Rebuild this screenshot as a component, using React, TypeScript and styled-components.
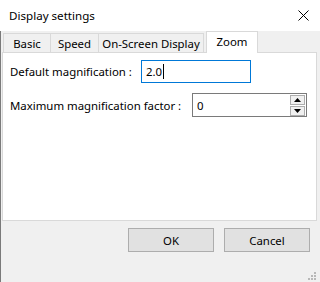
import styled, { createGlobalStyle } from "styled-components";

const GlobalStyle = createGlobalStyle`
  html, body {
    margin: 0;
    padding: 0;
    background: #f0f0f0;
  }
  body {
    font-family: "Noto Sans", "Open Sans", sans-serif;
    font-size: 11.4px;
    color: #000;
  }
`;

const Frame = styled.div`
  width: 320px;
  height: 282px;
  display: flex;
  flex-direction: column;
  background: #f0f0f0;
  overflow: hidden;
`;

const TitleBar = styled.div`
  height: 31px;
  flex: none;
  display: flex;
  align-items: center;
  justify-content: space-between;
  background: #fff;
  padding: 0 11px 1px 9px;
  box-sizing: border-box;
`;

const Title = styled.span`
  font-size: 11.6px;
`;

const Body = styled.div`
  flex: 1;
  display: flex;
  flex-direction: column;
  border-left: 1px solid #7a7a7a;
  padding: 0 3px 0 1px;
`;

const TabStrip = styled.div`
  height: 21px;
  display: flex;
  align-items: flex-end;
  padding-left: 1px;
`;

const Tab = styled.div<{ $w: number; $active?: boolean }>`
  box-sizing: border-box;
  width: ${({ $w }) => $w}px;
  height: ${({ $active }) => ($active ? 22 : 19)}px;
  margin-left: ${({ $active }) => ($active ? 2 : -1)}px;
  margin-bottom: ${({ $active }) => ($active ? -1 : 0)}px;
  border: 1px solid #d9d9d9;
  border-bottom: none;
  background: ${({ $active }) => ($active ? "#fff" : "#f0f0f0")};
  display: flex;
  align-items: center;
  justify-content: center;
  white-space: nowrap;
  padding-bottom: ${({ $active }) => ($active ? 2 : 0)}px;
  position: relative;
  z-index: ${({ $active }) => ($active ? 1 : 0)};
  &:first-child {
    margin-left: 0;
  }
`;

const Panel = styled.div`
  box-sizing: border-box;
  height: 169px;
  background: #fff;
  border: 1px solid #d9d9d9;
  padding: 7px 7px;
  display: flex;
  flex-direction: column;
  gap: 10px;
`;

const Row = styled.div`
  display: flex;
  align-items: center;
`;

const Label = styled.span<{ $w: number }>`
  width: ${({ $w }) => $w}px;
  flex: none;
  white-space: nowrap;
`;

const TextBox = styled.div`
  box-sizing: border-box;
  width: 110px;
  height: 23px;
  border: 1px solid #0078d7;
  display: flex;
  align-items: center;
  padding-left: 4px;
`;

const Caret = styled.span`
  display: inline-block;
  width: 1px;
  height: 15px;
  background: #000;
  margin-left: 1px;
`;

const SpinBox = styled.div`
  box-sizing: border-box;
  width: 115px;
  height: 24px;
  border: 1px solid #7a7a7a;
  display: flex;
  align-items: center;
  padding-left: 4px;
  padding-right: 1px;
`;

const SpinValue = styled.span`
  flex: 1;
`;

const SpinButtons = styled.div`
  display: flex;
  flex-direction: column;
  gap: 1px;
  width: 15px;
`;

const SpinButton = styled.div`
  box-sizing: border-box;
  height: 10px;
  background: #f0f0f0;
  border: 1px solid #adadad;
  display: flex;
  align-items: center;
  justify-content: center;
`;

const Footer = styled.div`
  flex: 1;
  display: flex;
  justify-content: flex-end;
  align-items: flex-start;
  gap: 10px;
  padding: 7px 7px 0 0;
  position: relative;
`;

const Button = styled.button`
  box-sizing: border-box;
  width: 86px;
  height: 24px;
  background: #e1e1e1;
  border: 1px solid #adadad;
  font-family: inherit;
  font-size: 11.4px;
  color: #000;
  padding: 0;
`;

const Grip = styled.svg`
  position: absolute;
  right: 1px;
  bottom: 2px;
`;

const Arrow = ({ up }: { up?: boolean }) => (
  <svg width="7" height="4" viewBox="0 0 7 4">
    <polygon points={up ? "3.5,0 7,4 0,4" : "0,0 7,0 3.5,4"} fill="#000" />
  </svg>
);

const App = () => {
  return (
    <>
      <GlobalStyle />
      <Frame>
        <TitleBar>
          <Title>Display settings</Title>
          <svg width="11" height="11" viewBox="0 0 11 11">
            <path d="M0.5 0.5 L10.5 10.5 M10.5 0.5 L0.5 10.5" stroke="#000" strokeWidth="1" />
          </svg>
        </TitleBar>
        <Body>
          <TabStrip>
            <Tab $w={48}>Basic</Tab>
            <Tab $w={49}>Speed</Tab>
            <Tab $w={106}>On-Screen Display</Tab>
            <Tab $w={52} $active>
              Zoom
            </Tab>
          </TabStrip>
          <Panel>
            <Row>
              <Label $w={131}>Default magnification :</Label>
              <TextBox>
                2.0
                <Caret />
              </TextBox>
            </Row>
            <Row>
              <Label $w={182}>Maximum magnification factor :</Label>
              <SpinBox>
                <SpinValue>0</SpinValue>
                <SpinButtons>
                  <SpinButton>
                    <Arrow up />
                  </SpinButton>
                  <SpinButton>
                    <Arrow />
                  </SpinButton>
                </SpinButtons>
              </SpinBox>
            </Row>
          </Panel>
          <Footer>
            <Button>OK</Button>
            <Button>Cancel</Button>
            <Grip width="8" height="8" viewBox="0 0 8 8">
              <rect x="6" y="0" width="2" height="2" fill="#b8b8b8" />
              <rect x="3" y="3" width="2" height="2" fill="#b8b8b8" />
              <rect x="6" y="3" width="2" height="2" fill="#b8b8b8" />
              <rect x="0" y="6" width="2" height="2" fill="#b8b8b8" />
              <rect x="3" y="6" width="2" height="2" fill="#b8b8b8" />
              <rect x="6" y="6" width="2" height="2" fill="#b8b8b8" />
            </Grip>
          </Footer>
        </Body>
      </Frame>
    </>
  );
};

export default App;
